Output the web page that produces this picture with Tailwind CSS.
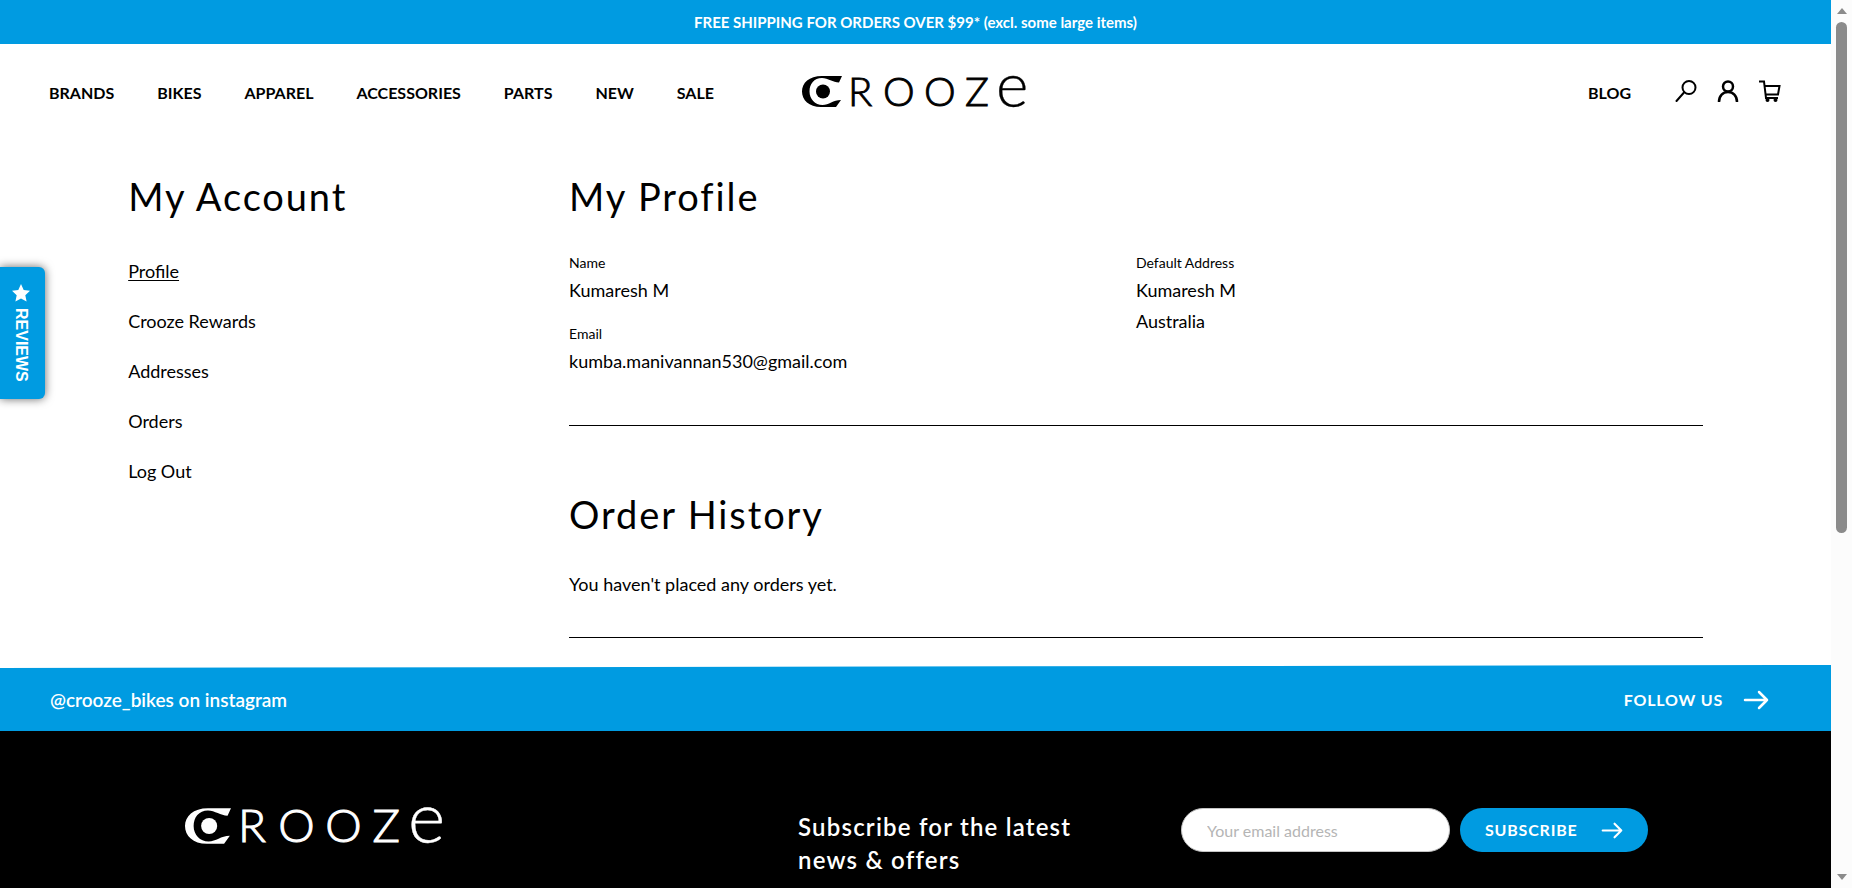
<!DOCTYPE html>
<html lang="en">
<head>
<meta charset="utf-8">
<title>My Account – Crooze</title>
<meta name="viewport" content="width=device-width, initial-scale=1">
<script src="https://cdn.jsdelivr.net/npm/@tailwindcss/browser@4"></script>
</head>
<body class="bg-white text-black font-['Lato',sans-serif]">
<svg class="hidden" aria-hidden="true">
  <symbol id="logo" viewBox="0 0 227 31" overflow="visible">
    <path fill="currentColor" d="M20 0H40L37 6.500C31 6.500 26 2 20 2C12 2 7.500 8 7.500 15.500C7.500 23 13 29 20.500 29C27 29 31 24 39 24L34 31H19C7 31 0 24 0 15.500C0 7 7 0 20 0Z"/>
    <circle cx="21" cy="15.500" r="7" fill="currentColor"/>
    <g fill="currentColor" font-family="Lato, sans-serif">
      <text x="46 81 122 163" y="29.500" font-size="40" font-weight="300" stroke="currentColor" stroke-width="0.900">ROOZ</text>
      <text x="194" y="30.500" font-size="62" font-weight="300" stroke="currentColor" stroke-width="0.300">e</text>
    </g>
  </symbol>
  <symbol id="arrow" viewBox="0 0 26 20">
    <path fill="none" stroke="currentColor" stroke-width="2.500" stroke-linecap="round" stroke-linejoin="round" d="M2 10H24M16 2L24 10L16 18"/>
  </symbol>
</svg>
<div class="flex h-screen overflow-hidden">
  <div class="min-w-0 flex-1">
    <div class="flex h-11 items-center justify-center bg-[#009be1] text-[15px] font-bold text-white">FREE SHIPPING FOR ORDERS OVER $99* (excl. some large items)</div>

    <header class="grid h-[94px] grid-cols-[1fr_auto_1fr] items-center pr-[50px] pl-[49px]">
      <nav aria-label="Shop" class="flex gap-[43px] pt-1 text-base font-bold">
        <a href="#">BRANDS</a><a href="#">BIKES</a><a href="#">APPAREL</a><a href="#">ACCESSORIES</a><a href="#">PARTS</a><a href="#">NEW</a><a href="#">SALE</a>
      </nav>
      <a href="#" aria-label="Crooze home"><svg class="h-[31px] w-[227px] overflow-visible"><use href="#logo"/></svg></a>
      <div class="flex items-center justify-end gap-5">
        <a href="#" class="mr-6 pt-1 text-base font-bold">BLOG</a>
        <button type="button" aria-label="Search"><svg class="size-[22px]" viewBox="0 0 22 22" fill="none" stroke="currentColor" stroke-width="2" stroke-linecap="round"><circle cx="14" cy="7.500" r="6.500"/><path d="M9 12.500L1.500 21"/></svg></button>
        <a href="#" aria-label="Account"><svg class="size-[22px]" viewBox="0 0 22 22" fill="none" stroke="currentColor" stroke-width="2.500"><circle cx="11" cy="6.500" r="5"/><path d="M2 22C2 15.500 6 12 11 12S20 15.500 20 22"/></svg></a>
        <a href="#" aria-label="Cart"><svg class="size-[22px]" viewBox="0 0 22 22" fill="none" stroke="currentColor" stroke-width="2"><path d="M0 1.500H5L7 18H19M5.500 6H20.500L19 14.500H6.500"/><circle cx="8.500" cy="20" r="1"/><circle cx="16.500" cy="20" r="1"/></svg></a>
      </div>
    </header>

    <main class="flex px-[7%] pt-8 text-lg">
      <section class="w-[28%]">
        <h1 class="text-[38px] leading-[52px] tracking-wider">My Account</h1>
        <nav aria-label="Account" class="mt-[35px] flex flex-col items-start gap-[22px] leading-7">
          <a href="#" aria-current="page" class="underline underline-offset-2">Profile</a>
          <a href="#">Crooze Rewards</a>
          <a href="#">Addresses</a>
          <a href="#">Orders</a>
          <a href="#">Log Out</a>
        </nav>
      </section>
      <div class="w-[72%]">
        <section class="border-b border-black pb-12">
          <h2 class="text-[38px] leading-[52px] tracking-wider">My Profile</h2>
          <div class="mt-[29px] grid grid-cols-2 leading-[31px]">
            <dl>
              <dt class="text-sm leading-6">Name</dt>
              <dd>Kumaresh M</dd>
              <dt class="mt-4 text-sm leading-6">Email</dt>
              <dd>kumba.manivannan530@gmail.com</dd>
            </dl>
            <dl>
              <dt class="text-sm leading-6">Default Address</dt>
              <dd>Kumaresh M</dd>
              <dd>Australia</dd>
            </dl>
          </div>
        </section>
        <section class="border-b border-black pt-[62px] pb-[37px]">
          <h2 class="text-[38px] leading-[52px] tracking-wider">Order History</h2>
          <p class="mt-[29px] leading-[31px]">You haven't placed any orders yet.</p>
        </section>
      </div>
    </main>

    <section class="mt-[27px] flex h-[66px] items-center justify-between bg-[#009be1] pt-1 pr-[62px] pl-[50px] text-[19px] font-semibold text-white [clip-path:polygon(0_3px,100%_0,100%_100%,0_100%)]">
      <p>@crooze_bikes on instagram</p>
      <a href="#" class="flex items-center gap-5 text-base font-bold tracking-wider">FOLLOW US <svg class="h-5 w-[26px]"><use href="#arrow"/></svg></a>
    </section>

    <footer class="flex h-[400px] items-start bg-black pt-[77px] pl-[185px] text-white">
      <a href="#" aria-label="Crooze home" class="w-[613px]"><svg class="h-9 w-[261px] overflow-visible"><use href="#logo"/></svg></a>
      <h2 class="w-[383px] pr-[90px] pt-0.5 text-2xl leading-[33px] font-semibold tracking-wider">Subscribe for the latest news &amp; offers</h2>
      <form class="flex gap-2.5">
        <input type="email" aria-label="Your email address" placeholder="Your email address" class="h-11 w-[269px] rounded-full border border-[#c4c4c4] bg-white px-[25px] text-base text-black placeholder:text-[#b5b5b5]">
        <button type="button" class="flex h-11 w-[188px] items-center justify-between rounded-full bg-[#009be1] px-[25px] text-base font-bold tracking-wider">SUBSCRIBE <svg class="h-[17px] w-[22px]"><use href="#arrow"/></svg></button>
      </form>
    </footer>
  </div>

  <div aria-hidden="true" class="flex w-[21px] flex-col items-center bg-[#fcfcfc] py-2">
    <svg class="h-1.5 w-2.5" viewBox="0 0 10 6"><path fill="#8b8b8b" d="M0 6L5 0L10 6Z"/></svg>
    <div class="mt-2 h-[511px] w-[11px] rounded-full bg-[#8b8b8b]"></div>
    <svg class="mt-auto h-1.5 w-2.5" viewBox="0 0 10 6"><path fill="#8b8b8b" d="M0 0L5 6L10 0Z"/></svg>
  </div>
</div>

<button type="button" class="absolute top-[267px] left-0 flex h-[132px] w-[45px] flex-col items-center justify-center gap-1.5 rounded-r-md bg-[#009be1] pr-1 font-['Liberation_Sans',sans-serif] text-base font-bold text-white shadow-[0_0_10px_rgba(0,0,0,0.6)]">
  <svg class="size-[18px]" viewBox="0 0 18 18"><path fill="currentColor" d="M9 0L11.700 6L18 6.800L13.300 11.200L14.600 17.600L9 14.400L3.400 17.600L4.700 11.200L0 6.800L6.300 6Z"/></svg>
  <span class="[writing-mode:vertical-rl]">REVIEWS</span>
</button>
</body>
</html>
